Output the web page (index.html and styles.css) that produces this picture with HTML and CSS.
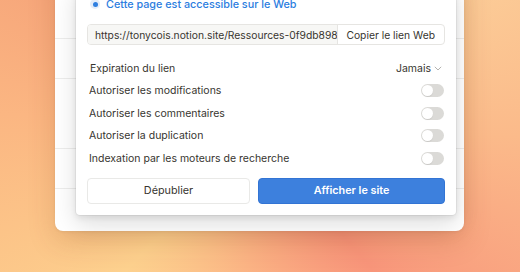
FILE: index.html
```
<!DOCTYPE html>
<html lang="fr">
<head>
<meta charset="utf-8">
<title>Publier</title>
<link rel="stylesheet" href="styles.css">
</head>
<body>
<div class="scene">
  <div class="backwin">
    <div class="bline b1"></div>
    <div class="bline b2"></div>
    <div class="bline b3"></div>
    <div class="bline b4"></div>
    <div class="popup">
      <div class="radio-row">
        <span class="radio"><span class="radio-dot"></span></span>
        <span class="radio-label">Cette page est accessible sur le Web</span>
      </div>
      <div class="link">
        <div class="link-url"><span class="url-text">https://tonycois.notion.site/Ressources-0f9db898</span></div>
        <div class="link-copy">Copier le lien Web</div>
      </div>
      <div class="rows">
        <div class="row">
          <span class="row-label first">Expiration du lien</span>
          <span class="select">Jamais
            <svg class="chev" width="8" height="5" viewBox="0 0 8 5"><path d="M0.8 0.8 L4 4 L7.2 0.8" fill="none" stroke="#b4b3b0" stroke-width="1"/></svg>
          </span>
        </div>
        <div class="row">
          <span class="row-label">Autoriser les modifications</span>
          <span class="toggle"><span class="knob"></span></span>
        </div>
        <div class="row">
          <span class="row-label">Autoriser les commentaires</span>
          <span class="toggle"><span class="knob"></span></span>
        </div>
        <div class="row">
          <span class="row-label">Autoriser la duplication</span>
          <span class="toggle"><span class="knob"></span></span>
        </div>
        <div class="row">
          <span class="row-label">Indexation par les moteurs de recherche</span>
          <span class="toggle"><span class="knob"></span></span>
        </div>
      </div>
      <div class="actions">
        <button class="btn">Dépublier</button>
        <button class="btn primary">Afficher le site</button>
      </div>
    </div>
  </div>
</div>
</body>
</html>
```
FILE: styles.css
```
* { box-sizing: border-box; }
html, body { margin: 0; padding: 0; }
body {
  width: 520px;
  height: 272px;
  overflow: hidden;
  font-family: Inter, "Liberation Sans", sans-serif;
  color: #37352f;
}
.scene {
  width: 520px;
  height: 272px;
  overflow: hidden;
  padding: 0 56px 0 55px;
  background: conic-gradient(from 0deg at 50% 50%,
    #fbc691 0deg, #fcd49d 40deg, #fbba8a 90deg, #f8957a 140deg,
    #fbb384 185deg, #fdd18e 225deg, #fbb682 275deg, #f49d76 320deg, #fbc691 360deg);
}
.backwin {
  position: relative;
  margin-top: -40px;
  height: 271px;
  background: #ffffff;
  border-radius: 8px;
  box-shadow: 0 10px 28px rgba(120, 50, 10, 0.18), 0 1px 3px rgba(0,0,0,0.06);
}
.bline { border-bottom: 1px solid #ededec; }
.b1 { height: 79px; }
.b2 { height: 40px; }
.b3 { height: 70px; }
.b4 { height: 40px; }

.popup {
  position: absolute;
  left: 21px;
  top: 24px;
  width: 380px;
  background: #ffffff;
  border-radius: 4px;
  padding: 10px 11px 11px;
  box-shadow: 0 0 0 1px rgba(15,15,15,0.05), 0 3px 6px rgba(15,15,15,0.08), 0 9px 24px rgba(15,15,15,0.14);
  font-size: 10.5px;
}
.radio-row {
  display: flex;
  align-items: center;
  height: 20px;
  padding-left: 3px;
  gap: 6px;
}
.radio {
  width: 10px;
  height: 10px;
  border-radius: 50%;
  background: #e4edf9;
  display: flex;
  align-items: center;
  justify-content: center;
}
.radio-dot {
  width: 5px;
  height: 5px;
  border-radius: 50%;
  background: #2f7fe0;
}
.radio-label {
  color: #2b7de0;
  font-weight: 500;
  font-size: 10.8px;
}
.link {
  display: flex;
  height: 21px;
  margin-top: 10px;
  border: 1px solid #e6e5e2;
  border-radius: 4px;
  overflow: hidden;
}
.link-url {
  flex: 1;
  min-width: 0;
  background: #f7f7f5;
  padding: 0 0 0 7px;
  white-space: nowrap;
  overflow: hidden;
  display: flex;
  align-items: center;
}
.url-text { font-size: 10.3px; }
.link-copy {
  border-left: 1px solid #e6e5e2;
  padding: 0 9px 0 8px;
  display: flex;
  align-items: center;
  white-space: nowrap;
  font-size: 10.3px;
}
.rows { margin-top: 12px; padding: 0 1px 0 2px; }
.row {
  height: 22.5px;
  display: flex;
  align-items: center;
  justify-content: space-between;
}
.row-label.first { padding-left: 1px; }
.select {
  display: flex;
  align-items: center;
  gap: 3px;
  padding-right: 2px;
}
.toggle {
  width: 23px;
  height: 13px;
  border-radius: 7px;
  background: #dbdad7;
  padding: 1px;
  display: flex;
}
.knob {
  width: 11px;
  height: 11px;
  border-radius: 50%;
  background: #ffffff;
  box-shadow: 0 1px 1px rgba(0,0,0,0.08);
}
.actions {
  display: grid;
  grid-template-columns: 163px 1fr;
  gap: 8px;
  margin-top: 8px;
}
.btn {
  height: 26px;
  border-radius: 4px;
  font-family: Inter, "Liberation Sans", sans-serif;
  font-size: 10.8px;
  color: #37352f;
  background: #ffffff;
  border: 1px solid #e9e9e7;
  padding: 0;
}
.btn.primary {
  background: #3d80dd;
  border-color: #3274d4;
  color: #ffffff;
  font-weight: 600;
}
```
